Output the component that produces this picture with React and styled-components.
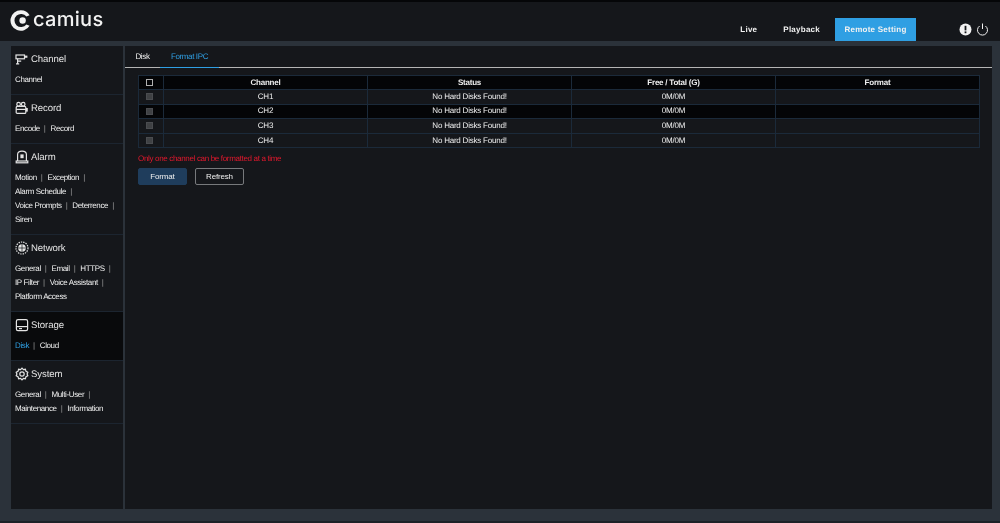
import React from 'react';
import styled, { createGlobalStyle } from 'styled-components';

const GlobalStyle = createGlobalStyle`
  html, body {
    margin: 0;
    padding: 0;
    height: 523px;
    overflow: hidden;
    background: #2b323a;
    font-family: 'Liberation Sans', Arial, sans-serif;
    text-rendering: geometricPrecision;
  }
  * { box-sizing: border-box; }
`;

const Page = styled.div`
  height: 523px;
  display: flex;
  flex-direction: column;
  border-top: 2px solid #050608;
  border-bottom: 2px solid #1c2127;
  will-change: transform;
`;

const Header = styled.header`
  height: 39px;
  flex: none;
  background: #15171b;
  display: flex;
  align-items: flex-end;
  justify-content: space-between;
  padding: 0 11px 0 10px;
`;

const Logo = styled.div`
  align-self: flex-start;
  margin-top: 8px;
  display: flex;
  align-items: center;
  gap: 2px;
  height: 21px;
  color: #f2f2f2;
`;

const LogoText = styled.span`
  font-family: Inter, 'Noto Sans', sans-serif;
  font-size: 20px;
  line-height: 19px;
  height: 21px;
  font-weight: 500;
  letter-spacing: 0.3px;
`;

const HeaderRight = styled.div`
  display: flex;
  align-items: flex-end;
`;

const NavItem = styled.div`
  height: 23px;
  line-height: 23px;
  width: ${p => (p.$active ? '81px' : 'auto')};
  padding: 0 ${p => (p.$active ? '0' : '13px')};
  margin-left: ${p => (p.$active ? '2px' : '0')};
  text-align: center;
  font-size: 8px;
  font-weight: 700;
  letter-spacing: 0.25px;
  color: #f2f2f2;
  background: ${p => (p.$active ? '#2f9fe3' : 'transparent')};
`;

const HeaderIcons = styled.div`
  display: flex;
  align-items: center;
  gap: 4px;
  height: 23px;
  margin-left: 43px;
`;

const Body = styled.div`
  flex: 1;
  display: flex;
  gap: 2px;
  padding: 5px 8px 12px 11px;
  min-height: 0;
`;

const Sidebar = styled.nav`
  width: 112px;
  flex: none;
  background: #15171b;
`;

const Section = styled.section`
  padding: 0 0 7px 4px;
  border-bottom: 1px solid #1c2530;
  background: ${p => (p.$active ? '#090a0c' : 'transparent')};
`;

const SectionTitle = styled.div`
  height: 26px;
  display: flex;
  align-items: center;
  gap: 2px;
  font-size: 9.6px;
  letter-spacing: -0.1px;
  color: #e4e4e4;
`;

const LinkWrap = styled.div`
  display: flex;
  flex-wrap: wrap;
  padding-top: 1px;
  line-height: 14px;
  font-size: 8px;
  letter-spacing: -0.38px;
`;

const LinkItem = styled.span`
  color: ${p => (p.$active ? '#2f9fe3' : '#f0f0f0')};
  white-space: nowrap;
  &:not(:last-child)::after {
    content: '|';
    color: #9a9a9a;
    margin: 0 5px 0 4px;
  }
`;

const Content = styled.main`
  flex: 1;
  background: #15171b;
`;

const Tabs = styled.div`
  height: 22px;
  display: flex;
  border-bottom: 1px solid #b5b5b5;
`;

const Tab = styled.div`
  width: ${p => p.$w}px;
  height: 22px;
  line-height: 21px;
  text-align: center;
  font-size: 8px;
  letter-spacing: -0.38px;
  color: ${p => (p.$active ? '#2f9fe3' : '#f0f0f0')};
  border-bottom: 1px solid ${p => (p.$active ? '#2f9fe3' : 'transparent')};
`;

const Pane = styled.div`
  padding: 7px 12px 0 13px;
`;

const Table = styled.table`
  width: 841px;
  border-collapse: collapse;
  table-layout: fixed;
  font-size: 8px;
  letter-spacing: -0.22px;
  line-height: 10px;
  color: #f0f0f0;
`;

const Th = styled.th`
  height: 14px;
  padding: 0;
  background: #040507;
  border: 1px solid #1b2a3a;
  font-weight: 700;
  text-align: center;
`;

const Td = styled.td`
  height: 14.6px;
  padding: 0;
  border: 1px solid #1b2a3a;
  text-align: center;
  background: ${p => (p.$dark ? '#040507' : 'transparent')};
`;

const Check = styled.span`
  display: block;
  width: 7px;
  height: 7px;
  margin-left: 7px;
  background: ${p => (p.$head ? 'transparent' : '#3f4144')};
  border: 1px solid ${p => (p.$head ? '#b0b0b0' : '#4a4c50')};
`;

const Notice = styled.div`
  margin-top: 6px;
  font-size: 8px;
  letter-spacing: -0.33px;
  line-height: 10px;
  color: #e3182d;
`;

const Buttons = styled.div`
  display: flex;
  gap: 8px;
  margin-top: 4px;
`;

const Button = styled.button`
  width: 49px;
  height: 17px;
  padding: 0;
  font-family: inherit;
  font-size: 8px;
  letter-spacing: -0.17px;
  color: #f0f0f0;
  background: ${p => (p.$primary ? '#1f3d5c' : 'transparent')};
  border: 1px solid ${p => (p.$primary ? '#1f3d5c' : '#77797c')};
  border-radius: 2px;
`;

const Icon = ({ children }) => (
  <svg width="14" height="14" viewBox="0 0 14 14" fill="none" stroke="#e4e4e4" strokeWidth="1.2" style={{ flex: 'none' }}>
    {children}
  </svg>
);

const sections = [
  { title: 'Channel', links: ['Channel'], icon: <><rect x="1" y="3" width="8.5" height="3.8" /><rect x="10" y="3.6" width="2.4" height="2.2" fill="#e4e4e4" stroke="none" /><path d="M2.6 6.8v5M1 11.8h3.2M2.6 9.2h3.6" /></> },
  { title: 'Record', links: ['Encode', 'Record'], icon: <><circle cx="3.6" cy="3.2" r="1.8" /><circle cx="8.2" cy="3.2" r="1.8" /><rect x="1.2" y="5.4" width="9.6" height="7" rx="1" /><rect x="10.8" y="7" width="2" height="3.6" fill="#e4e4e4" stroke="none" /><path d="M1.2 8.4h9.6" /></> },
  { title: 'Alarm', links: ['Motion', 'Exception', 'Alarm Schedule', 'Voice Prompts', 'Deterrence', 'Siren'], icon: <><path d="M2.6 11V4.6Q2.6 1.2 7 1.2T11.4 4.6V11" /><rect x="1.2" y="11" width="11.6" height="1.8" /><rect x="5.4" y="4.4" width="3.2" height="3.8" fill="#e4e4e4" stroke="none" /></> },
  { title: 'Network', links: ['General', 'Email', 'HTTPS', 'IP Filter', 'Voice Assistant', 'Platform Access'], icon: <><circle cx="7" cy="7" r="6" strokeDasharray="1.4 1" /><circle cx="7" cy="7" r="3.8" fill="#e4e4e4" stroke="none" /><path d="M3.4 7h7.2M7 3.2v7.6" stroke="#15171b" strokeWidth=".7" /></> },
  { title: 'Storage', active: true, links: ['Disk', 'Cloud'], icon: <><rect x="1.4" y="1.6" width="11.2" height="11" rx="1.6" /><path d="M1.4 8.6h11.2" /><path d="M4 10.6h3" /></> },
  { title: 'System', links: ['General', 'Multi-User', 'Maintenance', 'Information'], icon: <><path d="M7 1.2l1.4 1.5 2-.4.6 2 1.8 1-.7 1.7.7 1.7-1.8 1-.6 2-2-.4L7 12.8l-1.4-1.5-2 .4-.6-2-1.8-1 .7-1.7-.7-1.7 1.8-1 .6-2 2 .4z" /><circle cx="7" cy="7" r="2.2" /></> },
];

const rows = ['CH1', 'CH2', 'CH3', 'CH4'];

const App = () => (
  <Page>
    <GlobalStyle />
    <Header>
      <Logo>
        <svg width="21" height="21" viewBox="0 0 21 21">
          <path d="M11 0.2A10.3 10.3 0 1 0 19.6 15.8L16.4 14.4A6.6 6.6 0 1 1 16.4 6.6L19.6 5.2A10.3 10.3 0 0 0 11 0.2Z" fill="#f2f2f2" />
          <circle cx="12.6" cy="10.5" r="3.2" fill="#f2f2f2" />
        </svg>
        <LogoText>camius</LogoText>
      </Logo>
      <HeaderRight>
        <NavItem>Live</NavItem>
        <NavItem>Playback</NavItem>
        <NavItem $active>Remote Setting</NavItem>
        <HeaderIcons>
          <svg width="13" height="13" viewBox="0 0 13 13">
            <circle cx="6.5" cy="6.5" r="6" fill="#f2f2f2" />
            <rect x="5.6" y="2.8" width="1.8" height="4.6" fill="#15171b" />
            <rect x="5.6" y="8.4" width="1.8" height="1.8" fill="#15171b" />
          </svg>
          <svg width="13" height="13" viewBox="0 0 13 13" fill="none" stroke="#f2f2f2" strokeWidth="1">
            <path d="M3.6 3A5 5 0 1 0 9.4 3" />
            <path d="M6.5 0.5V6" />
          </svg>
        </HeaderIcons>
      </HeaderRight>
    </Header>
    <Body>
      <Sidebar>
        {sections.map(s => (
          <Section key={s.title} $active={s.active}>
            <SectionTitle><Icon>{s.icon}</Icon>{s.title}</SectionTitle>
            <LinkWrap>
              {s.links.map(l => (
                <LinkItem key={l} $active={l === 'Disk'}>{l}</LinkItem>
              ))}
            </LinkWrap>
          </Section>
        ))}
      </Sidebar>
      <Content>
        <Tabs>
          <Tab $w={35}>Disk</Tab>
          <Tab $w={59} $active>Format IPC</Tab>
        </Tabs>
        <Pane>
          <Table>
            <colgroup>
              <col style={{ width: 25 }} />
              <col style={{ width: 204 }} />
              <col style={{ width: 204 }} />
              <col style={{ width: 204 }} />
              <col style={{ width: 204 }} />
            </colgroup>
            <thead>
              <tr>
                <Th><Check $head /></Th>
                <Th>Channel</Th>
                <Th>Status</Th>
                <Th>Free / Total (G)</Th>
                <Th>Format</Th>
              </tr>
            </thead>
            <tbody>
              {rows.map((r, i) => (
                <tr key={r}>
                  <Td $dark={i === 1}><Check /></Td>
                  <Td $dark={i === 1}>{r}</Td>
                  <Td $dark={i === 1}>No Hard Disks Found!</Td>
                  <Td $dark={i === 1}>0M/0M</Td>
                  <Td $dark={i === 1} />
                </tr>
              ))}
            </tbody>
          </Table>
          <Notice>Only one channel can be formatted at a time</Notice>
          <Buttons>
            <Button $primary>Format</Button>
            <Button>Refresh</Button>
          </Buttons>
        </Pane>
      </Content>
    </Body>
  </Page>
);

export default App;
